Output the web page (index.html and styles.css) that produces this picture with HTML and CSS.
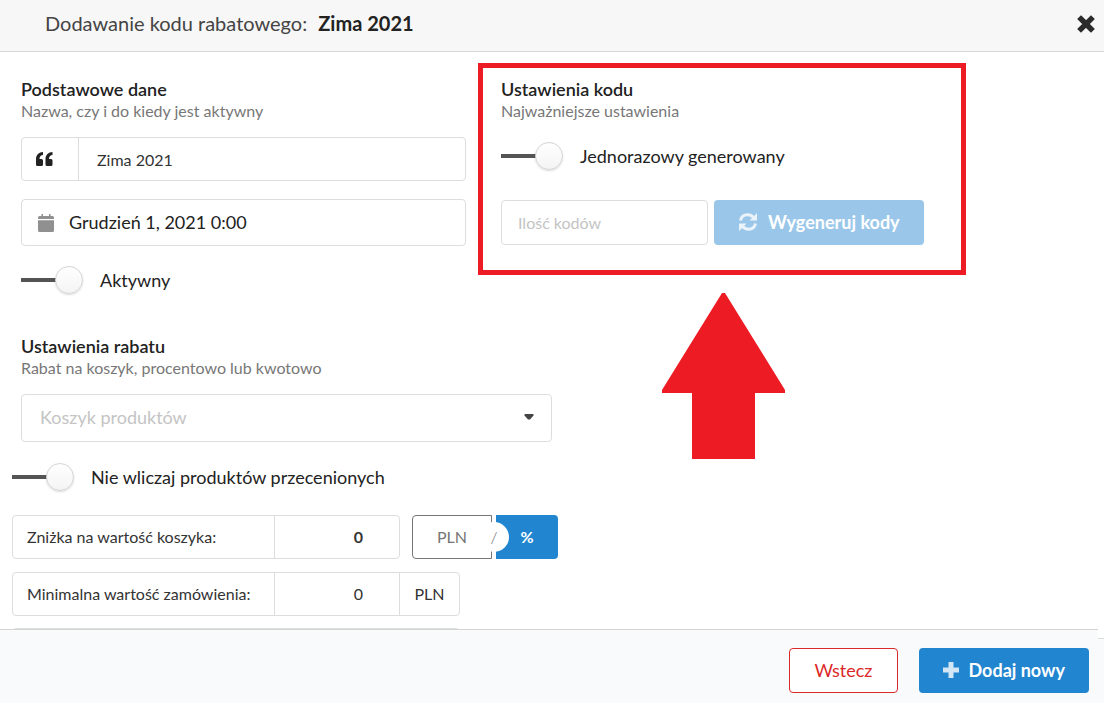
FILE: index.html
```html
<!DOCTYPE html>
<html lang="pl">
<head>
    <meta charset="UTF-8">
    <meta name="viewport" content="width=device-width, initial-scale=1.0">
    <title>Dodawanie kodu rabatowego</title>
    <link rel="stylesheet" href="styles.css">
</head>
<body>
<header class="header">
    <h1 class="title">Dodawanie kodu rabatowego: <strong>Zima 2021</strong></h1>
    <button type="button" class="close" aria-label="Zamknij">
        <svg width="18" height="18" viewBox="0 0 18 18"><path d="M4 4 14 14M14 4 4 14" stroke="currentColor" stroke-width="5.4" stroke-linecap="square" stroke-linejoin="round"/></svg>
    </button>
</header>
<main class="content">
    <section class="basic">
        <h2 class="heading">Podstawowe dane</h2>
        <p class="hint">Nazwa, czy i do kiedy jest aktywny</p>
        <div class="field name">
            <label class="addon" for="name">
                <svg width="17" height="14" viewBox="0 0 17 14" role="img" aria-label="Nazwa"><path d="M7 0C3 0 0 3 0 7v5.500Q0 14 1.500 14h4Q7 14 7 12.500v-4Q7 7 5.500 7H3.500C3.500 4.500 5 3 7 3ZM16.500 0c-4 0-7 3-7 7v5.500q0 1.500 1.500 1.500h4q1.500 0 1.500-1.500v-4Q16.500 7 15 7h-2c0-2.500 1.500-4 3.500-4Z" fill="currentColor"/></svg>
            </label>
            <input type="text" id="name" value="Zima 2021">
        </div>
        <div class="field date">
            <label for="date">
                <svg width="16" height="18" viewBox="0 0 16 18" role="img" aria-label="Data"><path d="M3.500 0h1.500v2h6V0h1.500v2H14.500Q16 2 16 3.500V5H0V3.500Q0 2 1.500 2h2ZM0 6.300h16V16.500q0 1.500-1.500 1.500h-13Q0 18 0 16.500Z" fill="currentColor"/></svg>
            </label>
            <input type="text" id="date" value="Grudzień 1, 2021 0:00">
        </div>
        <label class="toggle"><input type="checkbox" checked>Aktywny</label>
    </section>

    <section class="code">
        <h2 class="heading">Ustawienia kodu</h2>
        <p class="hint">Najważniejsze ustawienia</p>
        <label class="toggle"><input type="checkbox" checked>Jednorazowy generowany</label>
        <div class="generate">
            <input type="text" class="amount" placeholder="Ilość kodów" aria-label="Ilość kodów">
            <button type="button" class="button primary" disabled>
                <svg width="20" height="20" viewBox="0 0 20 20" fill="none" stroke="currentColor" stroke-width="3"><path d="M2.500 8.500C3.200 5 6 2.800 9.500 2.800c2.600 0 4.600 1 6.200 2.900M17.500 11.500c-.7 3.500-3.500 5.700-7 5.700-2.600 0-4.600-1-6.200-2.900"/><path d="M19 1v7.500h-7.500ZM1 19v-7.500h7.500Z" fill="currentColor" stroke="none"/></svg>
                Wygeneruj kody
            </button>
        </div>
    </section>

    <svg class="arrow" width="123" height="166" viewBox="0 0 123 166" aria-hidden="true"><path d="M60 0h3l60 97v3H93v66H30v-66H0v-3Z" fill="#ed1c24"/></svg>

    <section class="discount">
        <div class="cart">
            <h2 class="heading">Ustawienia rabatu</h2>
            <p class="hint">Rabat na koszyk, procentowo lub kwotowo</p>
            <div class="dropdown">
                <select aria-label="Rodzaj rabatu">
                    <option>Koszyk produktów</option>
                </select>
                <svg width="10" height="6" viewBox="0 0 10 6"><path d="M1 0h8q1 .5.500 1.500L6 5.500H4L.500 1.500Q0 .5 1 0Z" fill="#444"/></svg>
            </div>
        </div>
        <label class="toggle"><input type="checkbox" checked>Nie wliczaj produktów przecenionych</label>
        <div class="line">
            <div class="field row">
                <label for="value">Zniżka na wartość koszyka:</label>
                <input type="text" id="value" class="strong" value="0">
            </div>
            <div class="unit">
                <button type="button" class="pln">PLN</button>
                <span class="or">/</span>
                <button type="button" class="percent">%</button>
            </div>
        </div>
        <div class="line">
            <div class="field row">
                <label for="minimum">Minimalna wartość zamówienia:</label>
                <input type="text" id="minimum" value="0">
                <span class="suffix">PLN</span>
            </div>
        </div>
        <div class="line next">
            <div class="field row"></div>
        </div>
    </section>
</main>
<footer class="footer">
    <button type="button" class="button cancel">Wstecz</button>
    <button type="button" class="button primary">
        <svg width="16" height="16" viewBox="0 0 16 16"><path d="M8 0v16M0 8h16" stroke="currentColor" stroke-width="5"/></svg>
        Dodaj nowy
    </button>
</footer>
</body>
</html>
```

FILE: styles.css
```css
* {
    box-sizing: border-box;
}

body {
    display: flex;
    flex-direction: column;
    height: 100vh;
    margin: 0;
    overflow: hidden;
    font-family: Lato, 'Liberation Sans', sans-serif;
    font-size: 16px;
    color: #222;
    background-color: #fff;
}

input, select, button {
    margin: 0;
    font: inherit;
    color: inherit;
}

button {
    cursor: pointer;
}

.header {
    display: flex;
    flex-shrink: 0;
    align-items: center;
    justify-content: space-between;
    height: 52px;
    padding: 0 9px 4px 45px;
    background-color: #f7f7f7;
    border-bottom: 1px solid #d8d8d8;
}

.title {
    margin: 0;
    padding-bottom: 2px;
    font-size: 20px;
    font-weight: 400;
    color: #444;
}

.title strong {
    margin-left: 6px;
    font-weight: 700;
    color: #222;
}

.close {
    display: flex;
    padding: 0;
    color: #2b2b2b;
    background: none;
    border: 0;
}

.content {
    display: grid;
    grid-template-columns: 478px 82px 1fr;
    grid-template-rows: 230px 39px auto;
    flex: 1;
    min-height: 0;
    padding-top: 11px;
    overflow: hidden;
}

.basic {
    grid-area: 1 / 1 / 3 / 2;
    padding: 14px 12px 0 21px;
}

.code {
    grid-area: 1 / 2 / 2 / 4;
    justify-self: start;
    width: 488px;
    height: 212px;
    padding: 9px 18px;
    border: 5px solid #ed1c24;
}

.arrow {
    grid-area: 2 / 3 / 4 / 4;
    margin-left: 102px;
}

.discount {
    grid-area: 3 / 1 / 4 / 3;
    padding-left: 12px;
}

.cart {
    padding: 2px 8px 0 9px;
}

.heading {
    margin: 0;
    font-size: 18px;
    font-weight: 600;
    line-height: 24px;
}

.hint {
    margin: 0;
    font-size: 16px;
    line-height: 20px;
    color: #777;
}

.field {
    display: flex;
    align-items: center;
    border: 1px solid #dcdddd;
    border-radius: 4px;
}

.field input {
    flex: 1;
    min-width: 0;
    height: 100%;
    padding: 0 0 2px;
    background: none;
    border: 0;
    outline: 0;
}

.name {
    height: 44px;
    margin-top: 16px;
    color: #333;
}

.name .addon {
    display: flex;
    align-items: center;
    width: 57px;
    height: 100%;
    padding-left: 14px;
    color: #222;
    border-right: 1px solid #dcdddd;
}

.name input {
    padding: 0 0 0 18px;
}

.date {
    height: 47px;
    margin-top: 18px;
    font-size: 18px;
}

.date label {
    display: flex;
    width: 47px;
    padding-left: 16px;
    color: #909090;
}

.toggle {
    display: flex;
    align-items: center;
    gap: 17px;
    height: 26px;
    font-size: 18px;
    line-height: 22px;
}

.toggle input {
    display: flex;
    align-items: center;
    justify-content: flex-end;
    width: 62px;
    height: 26px;
    appearance: none;
    background: linear-gradient(#545454, #545454) left center / 40px 4px no-repeat;
}

.toggle input::before {
    width: 26px;
    height: 26px;
    content: '';
    background: linear-gradient(#fff, #f4f4f4);
    border: 1px solid #d4d4d5;
    border-radius: 50%;
    box-shadow: 0 1px 2px rgba(0, 0, 0, .15);
}

.basic .toggle {
    margin-top: 21px;
}

.code .toggle {
    margin-top: 22px;
}

.generate {
    display: flex;
    gap: 6px;
    margin-top: 31px;
}

.amount {
    width: 207px;
    height: 45px;
    padding: 0 16px;
    border: 1px solid #dcdddd;
    border-radius: 4px;
}

.amount::placeholder {
    color: #c4c4c4;
}

.button {
    display: flex;
    align-items: center;
    justify-content: center;
    height: 45px;
    padding: 0 24px 1px;
    font-size: 18px;
    border: 0;
    border-radius: 4px;
}

.primary {
    gap: 10px;
    font-weight: 700;
    color: #fff;
    background-color: #2185d0;
}

.primary svg {
    opacity: .8;
}

.primary:disabled {
    opacity: .45;
}

.dropdown {
    display: flex;
    align-items: center;
    margin-top: 16px;
}

.dropdown select {
    flex: 1;
    height: 48px;
    padding: 0 18px 2px;
    font-size: 18px;
    color: #c4c4c4;
    appearance: none;
    background: none;
    border: 1px solid #dcdddd;
    border-radius: 4px;
}

.dropdown svg {
    margin: 0 18px 2px -28px;
    pointer-events: none;
}

.discount .toggle {
    margin-top: 22px;
    margin-bottom: 25px;
}

.line {
    display: flex;
    gap: 12px;
    margin-bottom: 13px;
}

.row {
    height: 44px;
    color: #333;
}

.row label {
    width: 261px;
    padding: 0 0 2px 14px;
}

.row input {
    flex: none;
    width: 125px;
    padding-right: 36px;
    text-align: right;
    border-left: 1px solid #dcdddd;
}

.row .strong {
    font-weight: 700;
}

.suffix {
    width: 60px;
    height: 100%;
    line-height: 42px;
    text-align: center;
    border-left: 1px solid #dcdddd;
}

.next {
    margin-top: -1px;
}

.next .row {
    width: 448px;
}

.unit {
    display: flex;
    align-items: center;
}

.unit button {
    height: 44px;
    padding: 0 0 2px;
}

.pln {
    width: 80px;
    color: #767676;
    background: none;
    border: 1px solid #767676;
    border-radius: 4px 0 0 4px;
}

.or {
    z-index: 1;
    width: 30px;
    height: 30px;
    margin: 0 -17px 0 -13px;
    font-weight: 300;
    line-height: 30px;
    text-align: center;
    color: #666;
    background-color: #fff;
    border-radius: 50%;
}

.percent {
    width: 62px;
    margin-left: 4px;
    font-weight: 700;
    color: #fff;
    background-color: #2185d0;
    border: 0;
    border-radius: 0 4px 4px 0;
}

.footer {
    position: relative;
    display: flex;
    flex-shrink: 0;
    align-items: center;
    justify-content: flex-end;
    gap: 21px;
    height: 74px;
    padding: 8px 15px 0 0;
    background-color: #f9fafb;
    border-top: 1px solid #d4d4d5;
}

/* end of the scroll track */
.footer::after {
    position: absolute;
    top: -1px;
    right: 0;
    width: 6px;
    height: 9px;
    content: '';
    background-color: #fff;
    border-bottom: 1px solid #dcdddd;
}

.cancel {
    color: #db2828;
    background-color: #fff;
    border: 1px solid #db2828;
}
```
